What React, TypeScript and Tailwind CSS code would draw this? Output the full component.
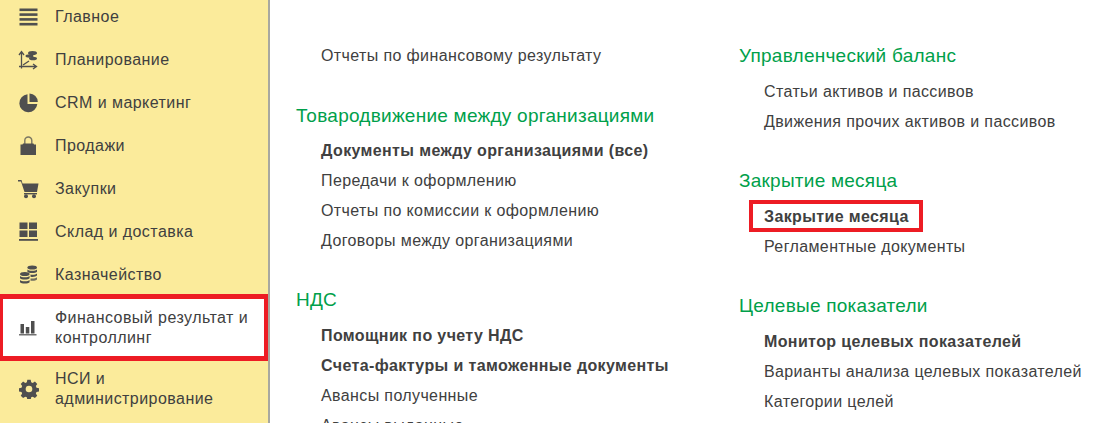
import { ReactNode } from "react";

const ink = "#4f4f4f";

function IconMenu() {
  return (
    <svg width="20" height="18" viewBox="0 0 20 18" fill={ink}>
      <rect x="0.500" y="0.500" width="18" height="2.600" />
      <rect x="0.500" y="5.300" width="18" height="2.600" />
      <rect x="0.500" y="10.100" width="18" height="2.600" />
      <rect x="0.500" y="14.900" width="18" height="2.600" />
    </svg>
  );
}

function IconPlan() {
  return (
    <svg width="20" height="20" viewBox="0 0 20 20" fill="none" stroke={ink} className="-ml-[1px]">
      <path d="M3.500 18.500V2M1 5l2.500-3.500L6 5M1 16.500h17M15 14l3.500 2.500L15 19" strokeWidth="1.300" />
      <path d="M5 15l6-4" strokeWidth="1.300" />
      <ellipse cx="14.500" cy="3" rx="4.500" ry="2" fill={ink} stroke="none" />
      <ellipse cx="11.500" cy="6" rx="4" ry="1.700" fill={ink} stroke="none" />
      <ellipse cx="15" cy="8.500" rx="4" ry="1.800" fill={ink} stroke="none" />
    </svg>
  );
}

function IconPie() {
  return (
    <svg width="20" height="20" viewBox="0 0 20 20" fill={ink}>
      <path d="M8.500 1.200A9 9 0 1 0 18.300 11H8.500Z" />
      <path d="M10.500 0.500V9h8.300A8.500 8.500 0 0 0 10.500 0.500Z" />
    </svg>
  );
}

function IconBag() {
  return (
    <svg width="20" height="20" viewBox="0 0 20 20" fill={ink}>
      <path d="M1.500 8.500h2L4 7.500h10.500l.5 1h2V19h-15.500Z" />
      <path d="M5.800 9V4.500a3.500 3.500 0 0 1 7 0V9" fill="none" stroke={ink} strokeWidth="1.400" opacity="0.75" />
    </svg>
  );
}

function IconCart() {
  return (
    <svg width="21" height="20" viewBox="0 0 21 20" fill={ink} className="-ml-[1px]">
      <path d="M0 1h3.500l1 3.500H20.500l-1.500 8.500H6.500L3 2.500H0Z" />
      <rect x="6" y="14" width="13" height="1.400" />
      <circle cx="8" cy="17.300" r="2" />
      <circle cx="16" cy="17.300" r="2" />
    </svg>
  );
}

function IconStock() {
  return (
    <svg width="20" height="20" viewBox="0 0 20 20" fill={ink}>
      <rect x="0.500" y="0.500" width="8" height="6.500" />
      <rect x="10" y="0.500" width="8" height="6.500" />
      <rect x="0.500" y="8.500" width="8" height="6.500" />
      <rect x="10" y="8.500" width="8" height="6.500" />
      <rect x="-0.500" y="17" width="19.500" height="1.800" />
    </svg>
  );
}

function IconCoins() {
  return (
    <svg width="20" height="20" viewBox="0 0 20 20" fill={ink}>
      <ellipse cx="13.200" cy="2.500" rx="4.800" ry="2" />
      <path d="M8.400 4.500c1 1.800 8.600 1.800 9.600 0v2.200c-1 1.800-8.600 1.800-9.600 0Z" />
      <path d="M11.500 9.600c2.500.5 5.500 0 6.500-1.200v2.200c-1 1.300-4 1.600-6.500 1.200Z" />
      <path d="M11.500 13.500c2.500.3 5.500 0 6.500-1.200v2.200c-1 1.300-4 1.600-6.500 1.200Z" opacity="0.8" />
      <ellipse cx="5.800" cy="9" rx="4.800" ry="2" />
      <path d="M1 11c1 1.800 8.600 1.800 9.600 0v2.200c-1 1.800-8.600 1.800-9.600 0Z" />
      <path d="M1 15c1 1.800 8.600 1.800 9.600 0v2.200c-1 1.800-8.600 1.800-9.600 0Z" />
    </svg>
  );
}

function IconBars() {
  return (
    <svg width="20" height="20" viewBox="0 0 20 20" fill={ink}>
      <rect x="1.500" y="6" width="3.500" height="9.500" />
      <rect x="6.800" y="9" width="3.500" height="6.500" />
      <rect x="12" y="3" width="3.500" height="12.500" />
      <rect x="0" y="16" width="17.500" height="1.500" opacity="0.8" />
    </svg>
  );
}

function IconGear() {
  return (
    <svg width="20" height="20" viewBox="0 0 24 24" fill={ink}>
      <path
        fillRule="evenodd"
        d="M10 1h4l.6 3 1.900.8 2.600-1.700 2.800 2.800-1.700 2.600.8 1.900 3 .6v4l-3 .6-.8 1.900 1.700 2.600-2.800 2.800-2.600-1.700-1.900.8-.6 3h-4l-.6-3-1.900-.8-2.600 1.700-2.800-2.800 1.700-2.600-.8-1.900-3-.6v-4l3-.6.8-1.900-1.700-2.600 2.800-2.800 2.600 1.700 1.900-.8ZM12 8a4 4 0 1 0 0 8 4 4 0 0 0 0-8Z"
      />
    </svg>
  );
}

const menu: { label: ReactNode; icon: ReactNode; active?: boolean }[] = [
  { label: "Главное", icon: <IconMenu /> },
  { label: "Планирование", icon: <IconPlan /> },
  { label: "CRM и маркетинг", icon: <IconPie /> },
  { label: "Продажи", icon: <IconBag /> },
  { label: "Закупки", icon: <IconCart /> },
  { label: "Склад и доставка", icon: <IconStock /> },
  { label: "Казначейство", icon: <IconCoins /> },
  { label: <>Финансовый результат и<br />контроллинг</>, icon: <IconBars />, active: true },
  { label: <>НСИ и<br />администрирование</>, icon: <IconGear /> },
];

function Heading({ children, className = "" }: { children: ReactNode; className?: string }) {
  return (
    <h3 className={`h-[30px] leading-[30px] text-[19px] tracking-[0.25px] text-[#00a04a] ${className}`}>{children}</h3>
  );
}

function Link({ children, bold }: { children: ReactNode; bold?: boolean }) {
  return (
    <div
      className={`h-[30px] leading-[30px] pl-[25px] text-[16px] tracking-[0.38px] whitespace-nowrap text-[#404040] ${
        bold ? "font-bold" : ""
      }`}
    >
      {children}
    </div>
  );
}

export default function App() {
  return (
    <div className="flex w-[1094px] h-[423px] overflow-hidden bg-white font-['Liberation_Sans',Arial,sans-serif]">
      {/* Sidebar */}
      <div className="w-[270px] shrink-0 h-full bg-[#fbeb9b] border-r-2 border-[#a8a8a0]">
        <div className="-mt-[5px]">
          {menu.map((item, i) => (
            <div
              key={i}
              className={`flex items-center text-[16px] tracking-[0.45px] leading-[20px] text-[#404040] ${
                item.active
                  ? "h-[67px] -mt-[2px] mb-[6px] bg-white border-y-[5px] border-l-[3px] border-r-[4px] border-[#ed1c24] pl-[16px]"
                  : "h-[43px] pl-[19px]"
              }`}
            >
              <span className="w-[36px] shrink-0 flex items-center">{item.icon}</span>
              <span>{item.label}</span>
            </div>
          ))}
        </div>
      </div>

      {/* Content */}
      <div className="flex-1 flex pl-[26px] pt-[41px]">
        <div className="w-[443px] shrink-0">
          <Link>Отчеты по финансовому результату</Link>
          <Heading className="mt-[30px] mb-[5px]">Товародвижение между организациями</Heading>
          <Link bold>Документы между организациями (все)</Link>
          <Link>Передачи к оформлению</Link>
          <Link>Отчеты по комиссии к оформлению</Link>
          <Link>Договоры между организациями</Link>
          <Heading className="mt-[29px] mb-[6px]">НДС</Heading>
          <Link bold>Помощник по учету НДС</Link>
          <Link bold>Счета-фактуры и таможенные документы</Link>
          <Link>Авансы полученные</Link>
          <Link>Авансы выданные</Link>
        </div>
        <div>
          <Heading className="mb-[6px]">Управленческий баланс</Heading>
          <Link>Статьи активов и пассивов</Link>
          <Link>Движения прочих активов и пассивов</Link>
          <Heading className="mt-[29px] mb-[6px]">Закрытие месяца</Heading>
          <div className="h-[30px] ml-[10px] flex items-start">
            <span className="h-[32px] -mt-[2px] pt-[1px] leading-[24px] border-4 border-[#ed1c24] pl-[11px] pr-[10px] text-[16px] tracking-[0.38px] font-bold text-[#404040] whitespace-nowrap">
              Закрытие месяца
            </span>
          </div>
          <Link>Регламентные документы</Link>
          <Heading className="mt-[29px] mb-[6px]">Целевые показатели</Heading>
          <Link bold>Монитор целевых показателей</Link>
          <Link>Варианты анализа целевых показателей</Link>
          <Link>Категории целей</Link>
        </div>
      </div>
    </div>
  );
}
